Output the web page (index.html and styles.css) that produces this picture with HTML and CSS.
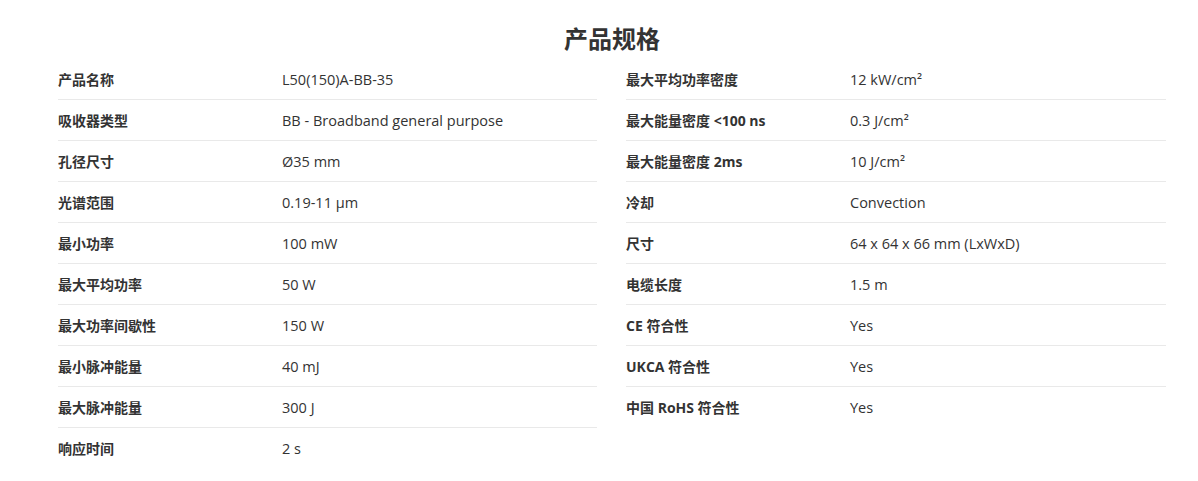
FILE: index.html
```html
<!DOCTYPE html>
<html lang="zh-CN">
<head>
<meta charset="utf-8">
<title>产品规格</title>
<link rel="stylesheet" href="styles.css">
</head>
<body>
<section class="specs">
  <h2 class="title">产品规格</h2>
  <div class="cols">
    <dl class="table">
      <div class="row"><dt>产品名称</dt><dd>L50(150)A-BB-35</dd></div>
      <div class="row"><dt>吸收器类型</dt><dd>BB - Broadband general purpose</dd></div>
      <div class="row"><dt>孔径尺寸</dt><dd>Ø35 mm</dd></div>
      <div class="row"><dt>光谱范围</dt><dd>0.19-11 μm</dd></div>
      <div class="row"><dt>最小功率</dt><dd>100 mW</dd></div>
      <div class="row"><dt>最大平均功率</dt><dd>50 W</dd></div>
      <div class="row"><dt>最大功率间歇性</dt><dd>150 W</dd></div>
      <div class="row"><dt>最小脉冲能量</dt><dd>40 mJ</dd></div>
      <div class="row"><dt>最大脉冲能量</dt><dd>300 J</dd></div>
      <div class="row"><dt>响应时间</dt><dd>2 s</dd></div>
    </dl>
    <dl class="table">
      <div class="row"><dt>最大平均功率密度</dt><dd>12 kW/cm<span class="sup">²</span></dd></div>
      <div class="row"><dt>最大能量密度 &lt;100 ns</dt><dd>0.3 J/cm<span class="sup">²</span></dd></div>
      <div class="row"><dt>最大能量密度 2ms</dt><dd>10 J/cm<span class="sup">²</span></dd></div>
      <div class="row"><dt>冷却</dt><dd>Convection</dd></div>
      <div class="row"><dt>尺寸</dt><dd>64 x 64 x 66 mm (LxWxD)</dd></div>
      <div class="row"><dt>电缆长度</dt><dd>1.5 m</dd></div>
      <div class="row"><dt>CE 符合性</dt><dd>Yes</dd></div>
      <div class="row"><dt>UKCA 符合性</dt><dd>Yes</dd></div>
      <div class="row"><dt>中国 RoHS 符合性</dt><dd>Yes</dd></div>
    </dl>
  </div>
</section>
</body>
</html>
```

FILE: styles.css
```css
html, body {
  margin: 0;
  padding: 0;
  background: #fff;
}
body {
  font-family: "Open Sans", "Noto Sans CJK SC", sans-serif;
  color: #333;
  font-size: 14px;
}
.specs {
  width: 1108px;
  margin-left: 58px;
  padding-top: 23px;
}
.title {
  margin: 0 0 4px;
  text-align: center;
  font-size: 24px;
  line-height: 32px;
  font-weight: 700;
  color: #333;
}
.cols {
  display: grid;
  grid-template-columns: 539px 540px;
  column-gap: 29px;
}
.table {
  margin: 0;
}
.row {
  display: grid;
  grid-template-columns: 224px 1fr;
  height: 40px;
  align-items: center;
  border-bottom: 1px solid #e9e9e9;
}
.row:last-child {
  border-bottom: none;
}
dt {
  font-weight: 700;
  margin: 0;
}
dd {
  margin: 0;
  font-size: 14.5px;
}
.sup {
  font-family: "Noto Sans", sans-serif;
}
```
